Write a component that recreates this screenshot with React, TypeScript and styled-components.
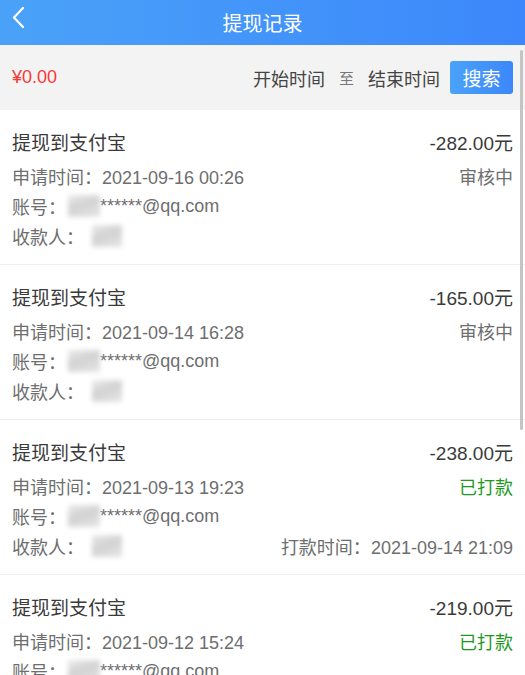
import React, { FC } from 'react';
import styled, { createGlobalStyle } from 'styled-components';

const GlobalStyle = createGlobalStyle`
  html, body {
    margin: 0;
    padding: 0;
    background: #fff;
    font-family: "Liberation Sans", "Noto Sans CJK SC", sans-serif;
  }
  * { box-sizing: border-box; }
`;

interface Record {
  amount: string;
  applied: string;
  paid: boolean;
  paidAt?: string;
}

const records: Record[] = [
  { amount: '-282.00', applied: '2021-09-16 00:26', paid: false },
  { amount: '-165.00', applied: '2021-09-14 16:28', paid: false },
  { amount: '-238.00', applied: '2021-09-13 19:23', paid: true, paidAt: '2021-09-14 21:09' },
  { amount: '-219.00', applied: '2021-09-12 15:24', paid: true },
];

const Page = styled.div`
  position: relative;
  width: 525px;
  height: 675px;
  overflow: hidden;
  background: #fff;
`;

const Header = styled.header`
  height: 45px;
  display: flex;
  align-items: center;
  justify-content: center;
  position: relative;
  background: linear-gradient(90deg, #4aa2f8 0%, #3c87fb 100%);
  color: #fff;
  font-size: 20px;
`;

const Back = styled.svg`
  position: absolute;
  left: 10px;
  top: 5px;
`;

const FilterBar = styled.div`
  height: 65px;
  display: flex;
  align-items: center;
  padding: 0 12px;
  background: #f3f3f3;
  font-size: 18px;
`;

const Balance = styled.span`
  color: #f43a3a;
  flex: 1;
`;

const DateLabel = styled.span`
  color: #444;
`;

const To = styled.span`
  color: #777;
  font-size: 15px;
  margin: 0 14px;
`;

const SearchButton = styled.button`
  margin-left: 10px;
  width: 63px;
  height: 33px;
  border: none;
  border-radius: 3px;
  background: linear-gradient(90deg, #4aa2f8 0%, #3c87fb 100%);
  color: #fff;
  font-size: 19px;
  font-family: inherit;
  padding: 0;
`;

const Item = styled.div`
  padding: 16px 12px 13px;
  border-bottom: 1px solid #eee;
`;

const Row = styled.div<{ $title?: boolean }>`
  display: flex;
  justify-content: space-between;
  align-items: center;
  height: 30px;
  white-space: nowrap;
  font-size: ${(p) => (p.$title ? '19px' : '18px')};
  color: ${(p) => (p.$title ? '#3a3a3a' : '#6e6e6e')};
  margin-bottom: ${(p) => (p.$title ? '5px' : '0')};
`;

const Amount = styled.span`
  color: #3a3a3a;
`;

const Status = styled.span<{ $paid: boolean }>`
  color: ${(p) => (p.$paid ? '#1e9a1e' : '#6e6e6e')};
`;

const Left = styled.span`
  display: flex;
  align-items: center;
`;

const Mask = styled.span<{ $w: number; $gap: number }>`
  display: inline-block;
  width: ${(p) => p.$w}px;
  height: 22px;
  margin-left: ${(p) => p.$gap}px;
  background: linear-gradient(160deg, #ececec 0%, #d2d2d2 45%, #e6e6e6 100%);
  filter: blur(2.5px);
`;

const Scroll = styled.div`
  position: absolute;
  right: 2px;
  top: 50px;
  width: 3px;
  height: 380px;
  background: #c4c4c4;
  border-radius: 2px;
`;

const RecordItem: FC<{ r: Record }> = ({ r }) => (
  <Item>
    <Row $title>
      <span>提现到支付宝</span>
      <Amount>{r.amount}元</Amount>
    </Row>
    <Row>
      <span>申请时间：{r.applied}</span>
      <Status $paid={r.paid}>{r.paid ? '已打款' : '审核中'}</Status>
    </Row>
    <Row>
      <Left>
        账号：
        <Mask $w={32} $gap={2} />
        ******@qq.com
      </Left>
    </Row>
    <Row>
      <Left>
        收款人：
        <Mask $w={30} $gap={8} />
      </Left>
      {r.paidAt && <span>打款时间：{r.paidAt}</span>}
    </Row>
  </Item>
);

export default function App() {
  return (
    <Page>
      <GlobalStyle />
      <Header>
        <Back width="18" height="26" viewBox="0 0 18 26" fill="none">
          <path d="M13 3 L4 12.5 L13 22" stroke="#fff" strokeWidth="2.2" strokeLinecap="round" strokeLinejoin="round" />
        </Back>
        提现记录
      </Header>
      <FilterBar>
        <Balance>¥0.00</Balance>
        <DateLabel>开始时间</DateLabel>
        <To>至</To>
        <DateLabel>结束时间</DateLabel>
        <SearchButton>搜索</SearchButton>
      </FilterBar>
      {records.map((r) => (
        <RecordItem key={r.applied} r={r} />
      ))}
      <Scroll />
    </Page>
  );
}
